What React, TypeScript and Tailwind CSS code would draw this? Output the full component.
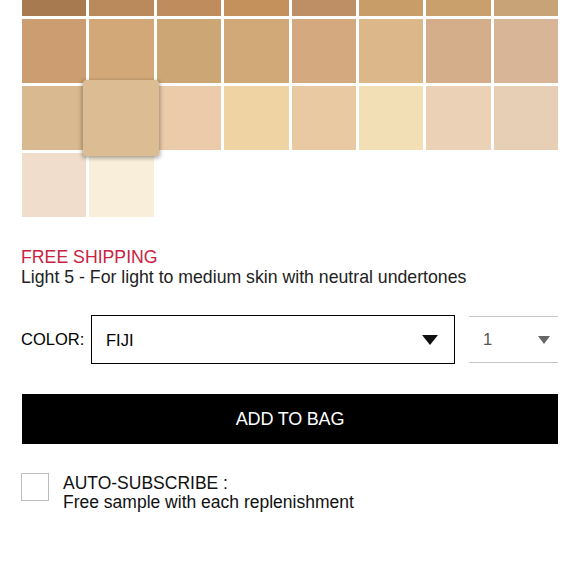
const SWATCHES = [
  ["#a87a50", "#bb8a5c", "#bf8c5e", "#c4915c", "#be8e64", "#c89d68", "#c99f6c", "#c8a377"],
  ["#cb9d70", "#d3a878", "#cca675", "#d1a978", "#d4a97f", "#dbb78a", "#d4ad8a", "#d8b597"],
  ["#d9b98f", "#dcbc92", "#eccbaa", "#f0d3a3", "#e9c9a2", "#f2dfb6", "#ebd1b6", "#e6cfb4"],
  ["#f0ddcc", "#f8eed9"],
];

const SELECTED = "2-1";

export default function App() {
  return (
    <div
      className="w-[580px] h-[580px] overflow-hidden bg-white text-black"
      style={{ fontFamily: '"Liberation Sans", Arial, sans-serif' }}
    >
      <div className="grid grid-cols-8 gap-[3px] px-[22px] mt-[-48px]">
        {SWATCHES.flatMap((row, r) =>
          row.map((color, c) => {
            const selected = `${r}-${c}` === SELECTED;
            return (
              <div
                key={`${r}-${c}`}
                className={
                  selected
                    ? "h-[64px] relative z-10 scale-[1.19] rounded-[3px] shadow-[0_1px_4px_rgba(0,0,0,0.35)]"
                    : "h-[64px]"
                }
                style={{ backgroundColor: color }}
              />
            );
          })
        )}
      </div>

      <div className="px-[21px] mt-[30px] text-[17.7px] leading-[20px]">
        <p className="text-[#c8243f]">FREE SHIPPING</p>
        <p className="text-[#222]">Light 5 - For light to medium skin with neutral undertones</p>
      </div>

      <div className="flex items-center px-[21px] mt-[28px]">
        <span className="text-[16.5px] w-[70px]">COLOR:</span>
        <div className="w-[364px] h-[49px] border-[1.5px] border-black flex items-center justify-between pl-[14px] pr-[16px]">
          <span className="text-[16.5px] mt-[2px]">FIJI</span>
          <svg width="16" height="10" viewBox="0 0 16 10">
            <path d="M0 0 H16 L8 10 Z" fill="#111" />
          </svg>
        </div>
        <div className="ml-[14px] w-[89px] h-[47px] border-y border-[#c8c8c8] flex items-center justify-between pl-[14px] pr-[8px]">
          <span className="text-[16.5px] text-[#555]">1</span>
          <svg width="12" height="8" viewBox="0 0 12 8">
            <path d="M0 0 H12 L6 8 Z" fill="#666" />
          </svg>
        </div>
      </div>

      <div className="px-[22px] mt-[30px]">
        <button className="w-full h-[50px] bg-black text-white text-[18px] tracking-[-0.2px]">
          ADD TO BAG
        </button>
      </div>

      <div className="flex items-start px-[21px] mt-[29px]">
        <div className="w-[28px] h-[28px] border border-[#bdbdbd]" />
        <div className="ml-[14px] text-[17.5px] leading-[19px] text-[#111] mt-[1px]">
          <p>AUTO-SUBSCRIBE :</p>
          <p>Free sample with each replenishment</p>
        </div>
      </div>
    </div>
  );
}
